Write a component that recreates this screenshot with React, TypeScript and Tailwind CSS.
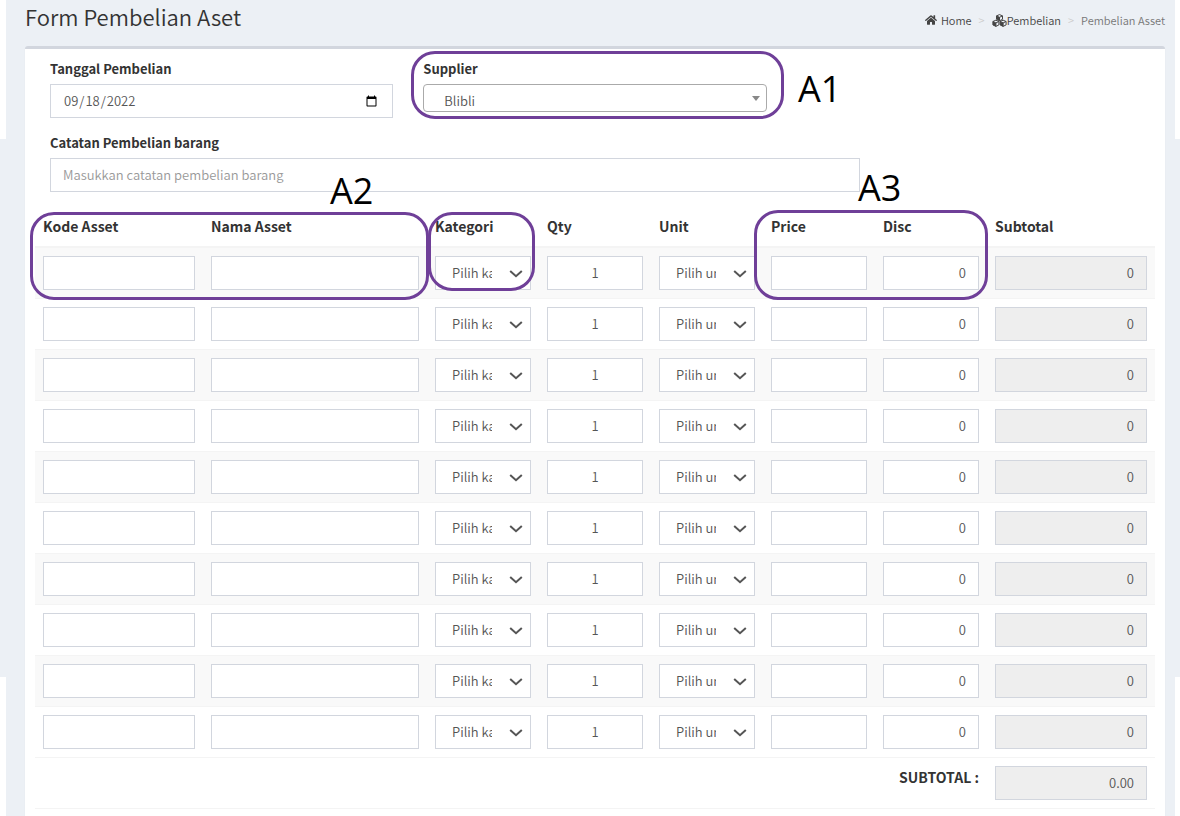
import { useState } from "react";
import { FaHome } from "react-icons/fa";

const rows = [1, 2, 3, 4, 5, 6, 7, 8, 9, 10];

const control =
	"block w-full h-[34px] border border-[#d2d6de] text-[13px] font-[350] leading-5 text-[#555] placeholder:text-[#999]";
const field = `${control} bg-white px-3 pb-0.5`;
const readOnlyField = `${control} bg-[#eee] px-3 pb-0.5 text-right`;
const cell = "border-b border-[#f4f4f4] p-2 align-top";

export default function App() {
	return (
		<div className="relative flex min-h-screen bg-[#ecf0f5] font-['Noto_Sans_CJK_SC',sans-serif] text-[#333]">
			<SideStrip className="w-1.5" />
			<main className="flex min-w-0 flex-1 flex-col pl-[19px] pr-2.5">
				<Header />
				<section className="flex-1 rounded-t-[3px] border-t-[3px] border-[#d2d6de] bg-white p-2.5 shadow-[0_1px_1px_rgba(0,0,0,0.1)]">
					<PurchaseFields />
					<AssetTable />
				</section>
			</main>
			<SideStrip className="w-[5px]" />
			<Annotations />
		</div>
	);
}

function SideStrip({ className }: { className: string }) {
	return (
		<div className={`flex shrink-0 flex-col ${className}`}>
			<div className="h-[139px] bg-white" />
			<div className="h-[538px]" />
			<div className="flex-1 bg-white" />
		</div>
	);
}

function Header() {
	return (
		<header className="flex h-[46px] items-start justify-between">
			<h1 className="pt-0.5 text-[22px] font-[350] leading-7">Form Pembelian Aset</h1>
			<nav className="flex items-center pt-[11px] text-[11px] font-[350] leading-[18px] text-[#444]">
				<a href="#home" className="flex items-center gap-1">
					<FaHome className="size-3" />
					Home
				</a>
				<span className="px-[7px] text-[#ccc]">&gt;</span>
				<a href="#pembelian" className="flex items-center">
					<CubesIcon />
					Pembelian
				</a>
				<span className="px-[7px] text-[#ccc]">&gt;</span>
				<span className="text-[#777]">Pembelian Asset</span>
			</nav>
		</header>
	);
}

// Three stacked cubes, each with a solid left face.
function CubesIcon() {
	const outline = "M0-3 3-1.700V1.700L0 3.200-3 1.700V-1.700ZM-3-1.700 0-.3 3-1.700M0-.3V3.200";
	const leftFace = "M-3-1.700 0-.3V3.200L-3 1.700Z";

	return (
		<svg viewBox="0 0 15 13" className="h-[13px] w-[15px] stroke-current" strokeLinejoin="round">
			{["translate(7.5 3.6)", "translate(3.9 9.2)", "translate(11.1 9.2)"].map((place) => (
				<g key={place} transform={place}>
					<path d={outline} fill="none" />
					<path d={leftFace} fill="currentColor" stroke="none" />
				</g>
			))}
		</svg>
	);
}

function PurchaseFields() {
	const [date, setDate] = useState("2022-09-18");

	return (
		<div className="text-[13px] leading-5">
			<div className="mb-[15px] flex">
				<div className="w-1/3 px-[15px]">
					<label htmlFor="tanggal" className="mb-[5px] block font-bold">
						Tanggal Pembelian
					</label>
					<input
						id="tanggal"
						type="date"
						value={date}
						onChange={(e) => setDate(e.target.value)}
						className={`${control} bg-white px-3`}
					/>
				</div>
				<div className="w-1/3 px-[15px]">
					<label htmlFor="supplier" className="mb-[5px] block font-bold">
						Supplier
					</label>
					<div className="relative">
						<select
							id="supplier"
							className="block h-7 w-full appearance-none rounded border border-[#aaa] bg-white pl-5 pt-1.5 text-[13px] font-[350] leading-5 text-[#555]"
						>
							<option>Blibli</option>
						</select>
						<svg
							viewBox="0 0 8 5"
							className="pointer-events-none absolute right-[7px] top-3 h-[5px] w-2 fill-[#888]"
						>
							<path d="M0 0h8L4 5z" />
						</svg>
					</div>
				</div>
			</div>
			<div className="mb-[15px] w-3/4 px-[15px]">
				<label htmlFor="catatan" className="mb-[5px] block font-bold">
					Catatan Pembelian barang
				</label>
				<input
					id="catatan"
					type="text"
					placeholder="Masukkan catatan pembelian barang"
					className={field}
				/>
			</div>
		</div>
	);
}

function AssetTable() {
	const th = "border-b-2 border-[#f4f4f4] p-2 text-left font-bold";

	return (
		<table className="w-full table-fixed border-separate border-spacing-0 text-sm leading-[23px]">
			<thead>
				<tr>
					<th className={`w-[15%] ${th}`}>Kode Asset</th>
					<th className={`w-[20%] ${th}`}>Nama Asset</th>
					<th className={`w-[10%] ${th}`}>Kategori</th>
					<th className={`w-[10%] ${th}`}>Qty</th>
					<th className={`w-[10%] ${th}`}>Unit</th>
					<th className={`w-[10%] ${th}`}>Price</th>
					<th className={`w-[10%] ${th}`}>Disc</th>
					<th className={`w-[15%] ${th}`}>Subtotal</th>
				</tr>
			</thead>
			<tbody>
				{rows.map((row) => (
					<AssetRow key={row} />
				))}
				<tr>
					<td colSpan={7} className={`${cell} text-right font-bold`}>
						<label htmlFor="subtotal">SUBTOTAL :</label>
					</td>
					<td className={cell}>
						<input id="subtotal" readOnly value="0.00" className={readOnlyField} />
					</td>
				</tr>
			</tbody>
		</table>
	);
}

function AssetRow() {
	return (
		<tr className="odd:bg-[#f9f9f9]">
			<td className={cell}>
				<input aria-label="Kode Asset" className={field} />
			</td>
			<td className={cell}>
				<input aria-label="Nama Asset" className={field} />
			</td>
			<td className={cell}>
				<SelectField label="Kategori" option="Pilih kategori" />
			</td>
			<td className={cell}>
				<input aria-label="Qty" defaultValue="1" className={`${field} text-center`} />
			</td>
			<td className={cell}>
				<SelectField label="Unit" option="Pilih unit" />
			</td>
			<td className={cell}>
				<input aria-label="Price" className={`${field} text-right`} />
			</td>
			<td className={cell}>
				<input aria-label="Disc" defaultValue="0" className={`${field} text-right`} />
			</td>
			<td className={cell}>
				<input aria-label="Subtotal" readOnly value="0" className={readOnlyField} />
			</td>
		</tr>
	);
}

function SelectField({ label, option }: { label: string; option: string }) {
	return (
		<div className="relative">
			<select
				aria-label={label}
				className={`${control} appearance-none bg-white pl-4 pr-[38px]`}
			>
				<option>{option}</option>
			</select>
			<svg
				viewBox="0 0 14 8"
				className="pointer-events-none absolute right-2 top-3.5 h-2 w-3.5 fill-none stroke-[#555] stroke-2"
			>
				<path d="M1.200 1 7 6.200 12.800 1" />
			</svg>
		</div>
	);
}

// Purple frames and their captions, drawn over the form.
function Annotations() {
	const frame = "absolute rounded-[24px] border-[3px] border-[#6f3f98]";
	const caption = "absolute text-4xl leading-10";

	return (
		<div className="pointer-events-none absolute inset-0 font-['Open_Sans',sans-serif] text-black">
			<div className={`${frame} left-[411px] top-[51px] h-[68px] w-[373px]`} />
			<div className={`${frame} left-[30px] top-[212px] h-[88px] w-[399px]`} />
			<div className={`${frame} left-[428px] top-[212px] h-[79px] w-[107px]`} />
			<div className={`${frame} left-[754px] top-[210px] h-[90px] w-[234px]`} />
			<span className={`${caption} left-[798px] top-[69px]`}>A1</span>
			<span className={`${caption} left-[330px] top-[171px]`}>A2</span>
			<span className={`${caption} left-[858px] top-[168px]`}>A3</span>
		</div>
	);
}
